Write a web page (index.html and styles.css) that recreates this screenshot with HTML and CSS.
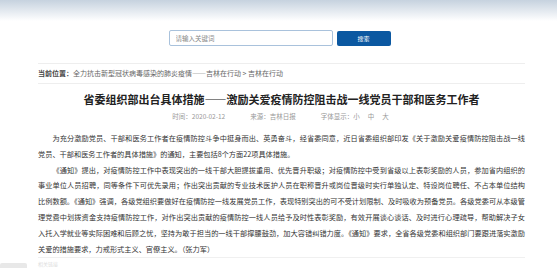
FILE: index.html
```html
<!DOCTYPE html>
<html lang="zh-CN">
<head>
    <meta charset="UTF-8">
    <meta name="viewport" content="width=device-width, initial-scale=1.0">
    <title>省委组织部出台具体措施</title>
    <link rel="stylesheet" href="styles.css">
</head>
<body>
    <!-- 顶部条 -->
    <div class="top-bar"></div>

    <!-- 搜索 -->
    <div class="search-row">
        <input type="text" class="search-input" placeholder="请输入关键词">
        <button class="search-btn">搜索</button>
    </div>

    <div class="main">
        <div class="crumb"><span class="crumb-label">当前位置：</span>全力抗击新型冠状病毒感染的肺炎疫情——吉林在行动 &gt; 吉林在行动</div>

        <h1 class="title">省委组织部出台具体措施——激励关爱疫情防控阻击战一线党员干部和医务工作者</h1>

        <div class="meta">
            <span>时间：2020-02-12</span>
            <span>来源：吉林日报</span>
            <span>字体显示：<a class="size">小</a><a class="size">中</a><a class="size">大</a></span>
        </div>

        <div class="content">
            <p>为充分激励党员、干部和医务工作者在疫情防控斗争中挺身而出、英勇奋斗，经省委同意，近日省委组织部印发《关于激励关爱疫情防控阻击战一线党员、干部和医务工作者的具体措施》的通知，主要包括8个方面22项具体措施。</p>
            <p>《通知》提出，对疫情防控工作中表现突出的一线干部大胆提拔重用、优先晋升职级；对疫情防控中受到省级以上表彰奖励的人员，参加省内组织的事业单位人员招聘，同等条件下可优先录用；作出突出贡献的专业技术医护人员在职称晋升或岗位晋级时实行单独认定、特设岗位聘任、不占本单位结构比例数额。《通知》强调，各级党组织要做好在疫情防控一线发展党员工作，表现特别突出的可不受计划限制、及时吸收为预备党员。各级党委可从本级管理党费中划拨资金支持疫情防控工作，对作出突出贡献的疫情防控一线人员给予及时性表彰奖励，有效开展谈心谈话、及时进行心理疏导，帮助解决子女入托入学就业等实际困难和后顾之忧，坚持为敢于担当的一线干部撑腰鼓劲，加大容错纠错力度。《通知》要求，全省各级党委和组织部门要跟进落实激励关爱的措施要求，力戒形式主义、官僚主义。（张力军）</p>
        </div>
    </div>

    <div class="footer">
        <div class="side-tab"></div>
        <span class="footer-text">相关链接</span>
    </div>
</body>
</html>
```

FILE: styles.css
```css
html {
    overflow: hidden;
}
body {
    font-family: "Noto Sans CJK SC", "Noto Sans", sans-serif;
    margin: 0;
    padding: 0;
    color: #333;
    background-color: #fff;
}
.top-bar {
    height: 21px;
    background: linear-gradient(to bottom, #c6d2df, #fff);
}
.search-row {
    display: flex;
    justify-content: center;
    gap: 4px;
    margin-top: 9px;
    padding-left: 2px;
}
.search-input {
    width: 164px;
    height: 16px;
    box-sizing: border-box;
    border: 1px solid #a9c2dc;
    border-radius: 2px;
    padding: 0 6px;
    font-family: inherit;
    font-size: 6.5px;
    outline: none;
}
.search-input::placeholder {
    color: #888;
}
.search-btn {
    width: 54px;
    height: 15px;
    margin-top: 1px;
    border: none;
    border-radius: 2px;
    background-color: #0b58a1;
    color: #fff;
    font-family: inherit;
    font-size: 6px;
    padding: 0;
}
.main {
    width: 487px;
    margin: 17px 0 0 38px;
}
.crumb {
    border-top: 1px solid #eee;
    border-bottom: 1px solid #eee;
    height: 19px;
    line-height: 19px;
    font-size: 7px;
    color: #666;
}
.crumb-label {
    color: #444;
    font-weight: bold;
}
.title {
    margin: 8px 0 0;
    text-align: center;
    font-size: 11px;
    line-height: 15px;
    font-weight: bold;
    color: #222;
}
.meta {
    display: flex;
    justify-content: center;
    gap: 25px;
    margin-top: 5px;
    font-size: 6.5px;
    line-height: 9px;
    color: #999;
    padding-left: 6px;
}
.size {
    margin-right: 8px;
}
.content {
    margin-top: 10px;
    font-size: 7.2px;
    line-height: 15.8px;
    color: #333;
}
.content p {
    margin: 0;
    text-indent: 2em;
    text-align: justify;
}
.footer {
    margin-top: 0;
    border-top: 1px solid #f0f0f0;
    margin-left: 38px;
    width: 487px;
    position: relative;
    height: 10px;
}
.side-tab {
    position: absolute;
    left: -38px;
    top: 5px;
    width: 27px;
    height: 10px;
    background-color: #e8e8e8;
    border-radius: 2px;
}
.footer-text {
    display: block;
    margin-top: 3px;
    font-size: 5px;
    line-height: 6px;
    color: #ddd;
}
```
